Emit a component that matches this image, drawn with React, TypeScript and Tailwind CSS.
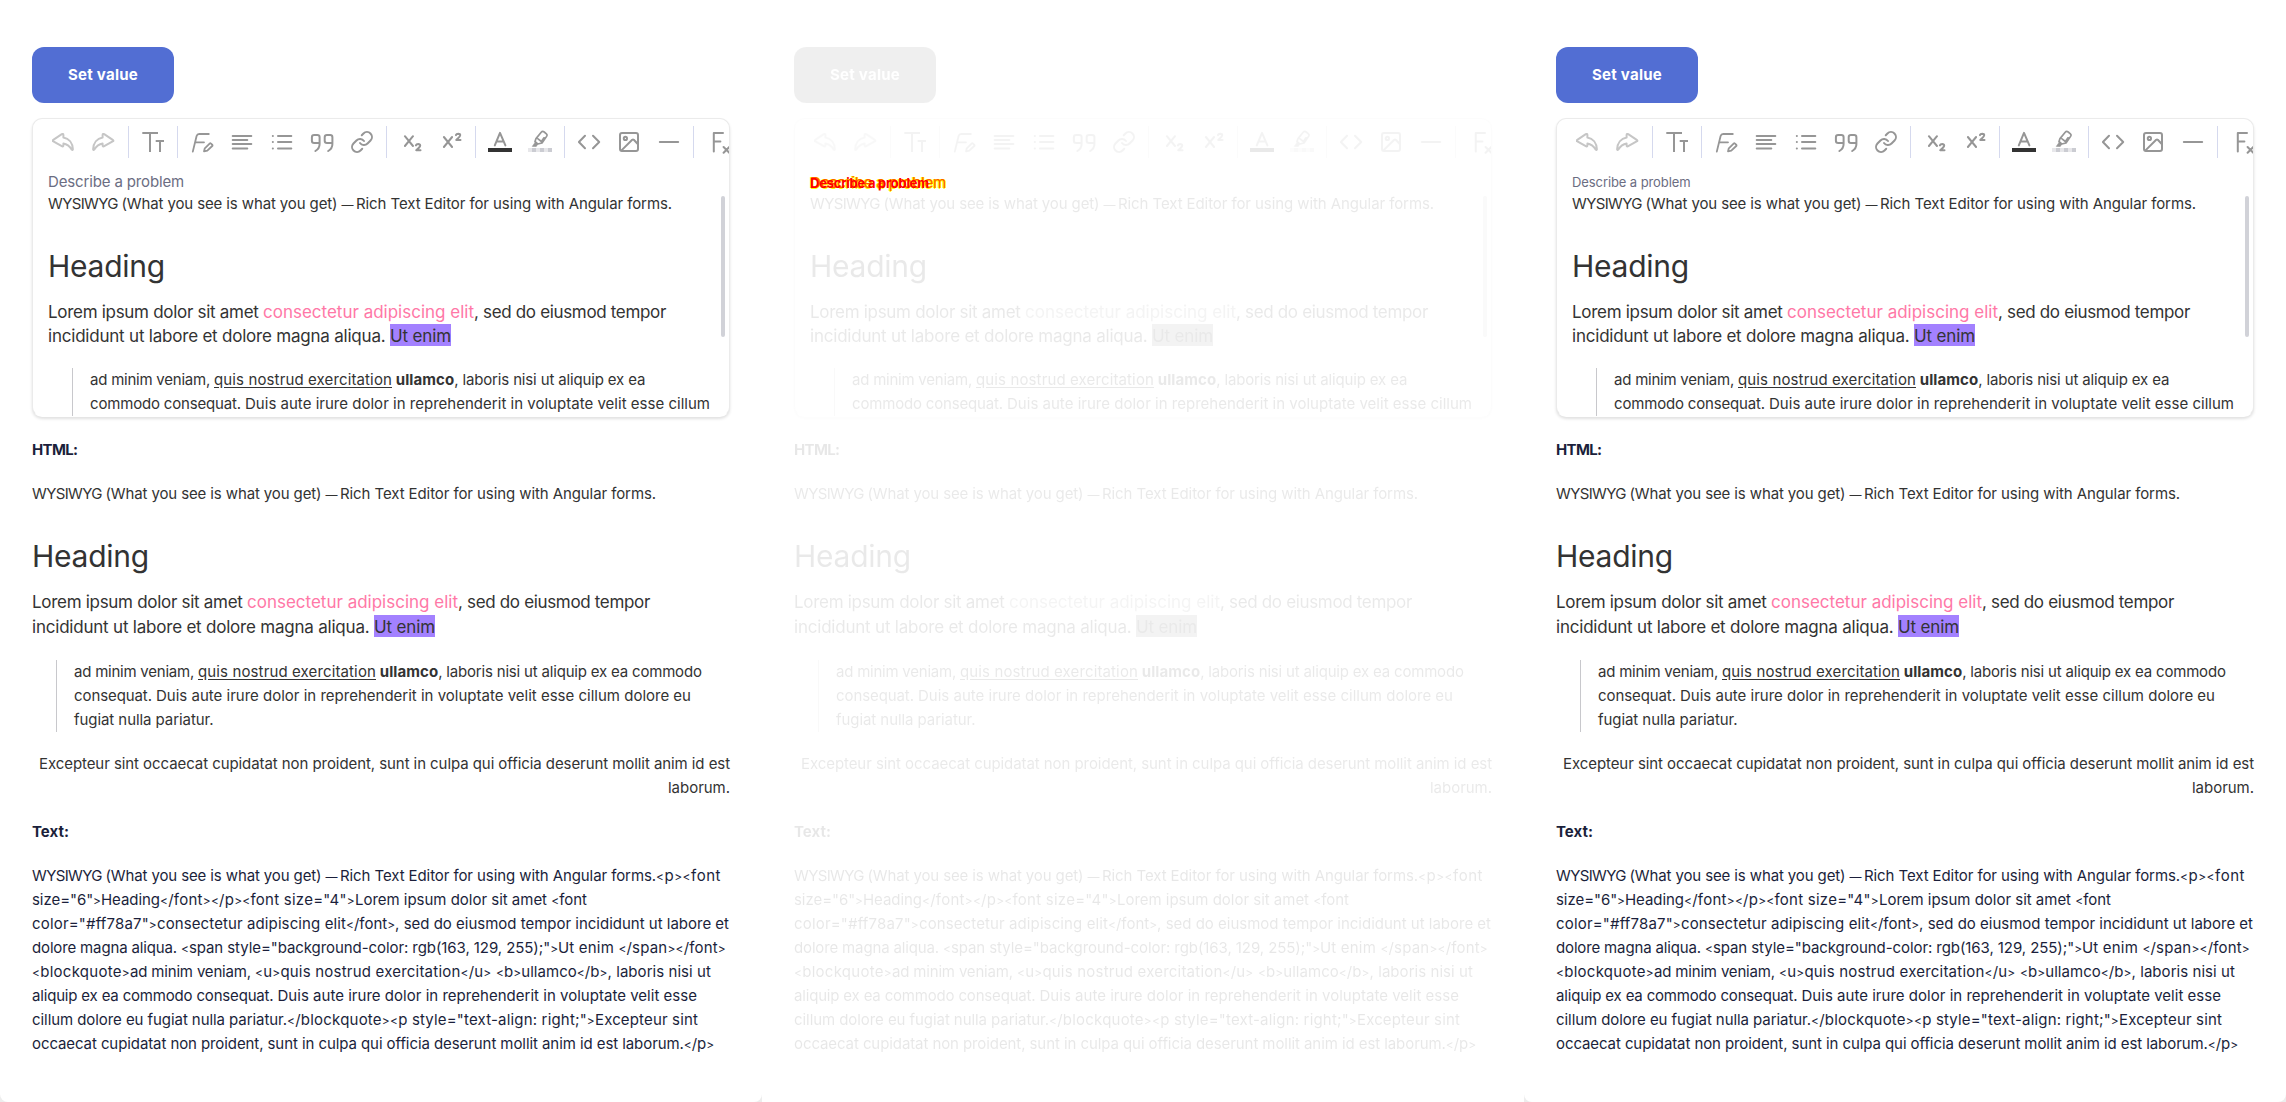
import { useLayoutEffect, useRef, type ReactNode } from 'react';

/** A run of text whose tracking is set so that it takes exactly `w` pixels. */
function Fit({ w, className = '', children }: { w: number; className?: string; children: string }) {
  const ref = useRef<HTMLSpanElement>(null);
  useLayoutEffect(() => {
    const el = ref.current;
    if (!el) return;
    el.style.letterSpacing = '0px';
    const natural = el.getBoundingClientRect().width;
    el.style.letterSpacing = `${(w - natural) / children.length}px`;
  }, [w, children]);
  const parts = children.split(/([<>—])/);
  return (
    <span ref={ref} className={`whitespace-pre ${className}`}>
      {parts.map((p, i) =>
        p === '<' || p === '>' || p === '—' ? (
          <span key={i} className="text-[12px] leading-none">{p}</span>
        ) : (
          p
        ),
      )}
    </span>
  );
}

type Seg = [string, number];

const INTRO: Seg[] = [
  ['WYSIWYG ', 73.5],
  ['(What you see is what you get) ', 220],
  ['— ', 14.5],
  ['Rich Text Editor for using with Angular forms.', 316],
];

const SOURCE: Seg[][] = [
  [...INTRO, ['<p><font', 65]],
  [['size="6">', 69], ['Heading', 59], ['</font></p><font size="4">', 195], ['Lorem ipsum dolor sit amet <font', 232]],
  [['color="#ff78a7">', 125], ['consectetur adipiscing elit', 189], ['</font>, sed do eiusmod tempor incididunt ut labore et', 383]],
  [['dolore magna aliqua. ', 149], ['<span style="background-color: rgb(163, 129, 255);">', 377], ['Ut enim </span></font>', 168]],
  [['<blockquote>', 98], ['ad minim veniam, ', 125], ['<u>quis nostrud exercitation</u> ', 241], ['<b>ullamco</b>, laboris nisi ut', 215]],
  [['aliquip ex ea commodo consequat. ', 245.5], ['Duis aute irure dolor in reprehenderit in voluptate velit esse', 419.5]],
  [['cillum dolore eu fugiat nulla pariatur.', 255], ['</blockquote>', 103], ['<p style="text-align: right;">', 205], ['Excepteur sint', 103]],
  [['occaecat cupidatat non proident, ', 235.5], ['sunt in culpa qui officia deserunt mollit anim id est laborum.</p>', 446.5]],
];

function Line({ segs }: { segs: Seg[] }) {
  return (
    <p className="h-6 whitespace-nowrap">
      {segs.map(([t, w], i) => (
        <Fit key={i} w={w}>{t}</Fit>
      ))}
    </p>
  );
}

function Icon({ children, muted = false }: { children: ReactNode; muted?: boolean }) {
  return (
    <span className="flex w-10 shrink-0 items-center justify-center">
      <svg
        viewBox="0 0 24 24"
        className={`size-6 ${muted ? 'text-[#c6c6c6]' : 'text-[#969696]'}`}
        fill="none"
        stroke="currentColor"
        strokeWidth="2"
        strokeLinecap="round"
        strokeLinejoin="round"
      >
        {children}
      </svg>
    </span>
  );
}

function Separator() {
  return <span className="mx-1 h-8 w-px shrink-0 bg-[#d5d9ee]" />;
}

function Toolbar() {
  return (
    <div className="flex h-8 pl-[11px]">
      <Icon muted>
        <path d="M.9 10.2 9.8 4.2C10.7 3.6 11.4 4 11.4 5V7.5C17 8.4 20.6 13 20.9 19.3 20.9 20.1 20.3 20.2 19.8 19.6 17.6 16.3 15.3 14.3 11.4 13.6V15.3C11.4 16.4 10.7 16.8 9.8 16.2L.9 11.2Q.3 10.7.9 10.2Z" />
      </Icon>
      <Icon muted>
        <path d="M21.1 10.2 12.2 4.2C11.3 3.6 10.6 4 10.6 5V7.5C5 8.4 1.4 13 1.1 19.3 1.1 20.1 1.7 20.2 2.2 19.6 4.4 16.3 6.7 14.3 10.6 13.6V15.3C10.6 16.4 11.3 16.8 12.2 16.2L21.1 11.2Q21.7 10.7 21.1 10.2Z" />
      </Icon>
      <Separator />
      <Icon>
        <path strokeLinecap="butt" d="M1.3 3H17M9 3V22M14.7 11H23M19 11V22" />
      </Icon>
      <Separator />
      <Icon>
        <path strokeWidth="1.8" d="M2.8 21.6 6.6 6Q7.2 4 9.2 4H18.8M5.3 12.3H14" />
        <path strokeWidth="1.8" d="M14 21.4 14.8 18.3 19.6 13.6Q20.3 13 21 13.6L22.2 14.7Q22.8 15.4 22.2 16L17.3 20.7Z" />
      </Icon>
      <Icon>
        <path d="M2.7 6H21.3M2.7 10H17.3M2.7 14H21.3M2.7 18.4H17.3" />
      </Icon>
      <Icon>
        <path d="M8 6H21.3M8 12H21.3M8 18.4H21.3M2.8 6H2.9M2.8 12H2.9M2.8 18.4H2.9" />
      </Icon>
      <Icon>
        <path d="M9.6 13H4.2Q1.9 13 1.9 10.7V7.3Q1.9 5 4.2 5H7.3Q9.6 5 9.6 7.3V14Q9.6 18.6 5.4 21" />
        <path d="M22.4 13H17Q14.7 13 14.7 10.7V7.3Q14.7 5 17 5H20.1Q22.4 5 22.4 7.3V14Q22.4 18.6 18.2 21" />
      </Icon>
      <Icon>
        <path d="M10 13a5 5 0 0 0 7.54.54l3-3a5 5 0 0 0-7.07-7.07l-1.72 1.71" />
        <path d="M14 11a5 5 0 0 0-7.54-.54l-3 3a5 5 0 0 0 7.07 7.07l1.71-1.71" />
      </Icon>
      <Separator />
      <Icon>
        <path d="M5.9 6.2 14 16M14 6.2 5.9 16" />
        <path d="M16.9 15.4Q17.4 14 19.2 14 21.3 14.1 21.2 15.6 21.1 16.9 17.2 20.2H21.5" />
      </Icon>
      <Icon>
        <path d="M4.9 7 13.1 17M13.1 7 4.9 17" />
        <path d="M16.9 5.1Q17.4 3.7 19.2 3.7 21.3 3.8 21.2 5.3 21.1 6.6 17.2 9.9H21.5" />
      </Icon>
      <Separator />
      <Icon>
        <path d="M6.8 15.4 12 2.9 17.4 15.4M8.8 11.4H15.4" />
        <path d="M0 18h24v4H0z" fill="#333333" stroke="none" />
      </Icon>
      <Icon>
        <path strokeWidth="1.7" d="M8 8.6 13.2 2.3Q14.5.8 16.2 2L18.4 3.8Q19.6 4.9 18.6 6.4L14 13 9.7 14 7 11.6ZM10 8.8 13.4 11.5 16 7.8" />
        <path d="M7.5 11.8 4.3 16.4H8.3L9.7 14.3Z" fill="currentColor" strokeWidth=".6" />
        <path d="M0 18h4v4H0zM8 18h4v4H8zM16 18h4v4H16z" fill="#e7e7ea" stroke="none" />
        <path d="M4 18h4v4H4zM12 18h4v4H12zM20 18h4v4H20z" fill="#cbccd2" stroke="none" />
      </Icon>
      <Separator />
      <Icon>
        <path d="M8 5.8 1.9 12 8 18.2M16 5.8 22.2 12 16 18.2" />
      </Icon>
      <Icon>
        <rect x="3" y="3" width="18" height="18" rx="2" />
        <circle cx="8.4" cy="8.4" r="1.6" />
        <path d="M4.5 20.4 15.2 9.8Q16 9.2 16.8 9.8L21 14.2" />
      </Icon>
      <Icon>
        <path d="M2.8 12H21.2" />
      </Icon>
      <Separator />
      <Icon>
        <path d="M7.8 21.4V3H17M7.8 11.5H14.4M17.6 17 23.3 22.8M23.3 17 17.6 22.8" />
      </Icon>
    </div>
  );
}

function Formatted() {
  return (
    <>
      <Line segs={INTRO} />
      <p className="mt-[30px] h-10 text-[30px] leading-10"><Fit w={117}>Heading</Fit></p>
    </>
  );
}

function Lorem({ className }: { className: string }) {
  return (
    <p className={`text-[17px] whitespace-nowrap ${className}`}>
      <Fit w={215}>{'Lorem ipsum dolor sit amet '}</Fit>
      <Fit w={211} className="text-[#ff78a7]">consectetur adipiscing elit</Fit>
      <Fit w={192}>, sed do eiusmod tempor</Fit>
      <br />
      <Fit w={342}>{'incididunt ut labore et dolore magna aliqua. '}</Fit>
      <Fit w={61} className="bg-[#a381ff] pt-[2px]">Ut enim</Fit>
    </p>
  );
}

function QuoteLead() {
  return (
    <>
      <Fit w={124}>{'ad minim veniam, '}</Fit>
      <Fit w={178} className="underline underline-offset-2">quis nostrud exercitation</Fit>
      <Fit w={3.7}>{' '}</Fit>
      <Fit w={58.5} className="font-bold">ullamco</Fit>
    </>
  );
}

function Editor({ label }: { label: ReactNode }) {
  return (
    <div className="relative mt-[15px] h-[299px] overflow-hidden rounded-[10px] border border-[#ebebeb] border-b-transparent bg-white pt-[7px] text-[#333333] shadow-[0_2px_3px_rgba(0,0,0,0.12)]">
      <Toolbar />
      <div className="pl-[15px]">
        <div className="mt-3 h-[22px] text-[#6b6d82]">{label}</div>
        <Formatted />
        <Lorem className="mt-[14px] leading-6" />
        <blockquote className="mt-5 ml-6 h-[49px] border-l border-[#c8c8cc] pl-[17px] whitespace-nowrap">
          <QuoteLead />
          <Fit w={191}>, laboris nisi ut aliquip ex ea</Fit>
          <br />
          <Fit w={155}>{'commodo consequat. '}</Fit>
          <Fit w={465}>Duis aute irure dolor in reprehenderit in voluptate velit esse cillum</Fit>
        </blockquote>
      </div>
      <div className="absolute top-[77px] right-1 h-[141px] w-1 rounded-full bg-[#d1d2d8]" />
    </div>
  );
}

function Demo({ label }: { label: ReactNode }) {
  return (
    <div className="h-[1102px] w-[762px] px-8 pt-[47px] text-[15px] leading-6 text-[#333333]">
      <button className="flex h-14 w-[142px] items-center justify-center rounded-xl bg-[#526ed3] font-bold text-white">
        <Fit w={70}>Set value</Fit>
      </button>
      <Editor label={label} />
      <h2 className="mt-[21px] h-6 font-bold text-[#1b1f3b]"><Fit w={45.5}>HTML:</Fit></h2>
      <div className="mt-5">
        <Formatted />
        <Lorem className="mt-[14px] leading-[25px]" />
        <blockquote className="mt-5 ml-6 border-l border-[#c8c8cc] pl-[17px] whitespace-nowrap">
          <QuoteLead />
          <Fit w={263.5}>, laboris nisi ut aliquip ex ea commodo</Fit>
          <br />
          <Fit w={82}>{'consequat. '}</Fit>
          <Fit w={535}>Duis aute irure dolor in reprehenderit in voluptate velit esse cillum dolore eu</Fit>
          <br />
          <Fit w={139.5}>fugiat nulla pariatur.</Fit>
        </blockquote>
        <p className="mt-5 text-right whitespace-nowrap">
          <Fit w={691}>Excepteur sint occaecat cupidatat non proident, sunt in culpa qui officia deserunt mollit anim id est</Fit>
          <br />
          <Fit w={62}>laborum.</Fit>
        </p>
      </div>
      <h2 className="mt-5 h-6 font-bold text-[#1b1f3b]"><Fit w={37}>Text:</Fit></h2>
      <div className="mt-5 text-[#1b1f3b]">
        {SOURCE.map((segs, i) => (
          <Line key={i} segs={segs} />
        ))}
      </div>
    </div>
  );
}

const LABEL = 'Describe a problem';

export default function App() {
  return (
    <div className="flex h-[1102px] w-[2286px] overflow-hidden bg-white font-['Inter',sans-serif]">
      <div className="bg-[#ededed]">
        <div className="rounded-b-lg bg-white">
          <Demo label={<Fit w={136}>{LABEL}</Fit>} />
        </div>
      </div>
      <div className="relative bg-white">
        <div className="opacity-10 grayscale">
          <Demo label={null} />
        </div>
        <div className="absolute top-[170px] left-12 leading-6">
          <Fit w={136} className="text-[15px] text-[#ff5a00] [text-shadow:1px_0_#ffff00,-1px_0_#ffff00,0_1px_#ffff00]">{LABEL}</Fit>
        </div>
        <div className="absolute top-[170px] left-12 leading-6">
          <Fit w={119} className="text-[13px] font-bold text-[#ff0000]">{LABEL}</Fit>
        </div>
      </div>
      <div className="bg-[#ededed]">
        <div className="rounded-b-lg bg-white">
          <Demo label={<Fit w={118.5} className="text-[13px]">{LABEL}</Fit>} />
        </div>
      </div>
    </div>
  );
}
